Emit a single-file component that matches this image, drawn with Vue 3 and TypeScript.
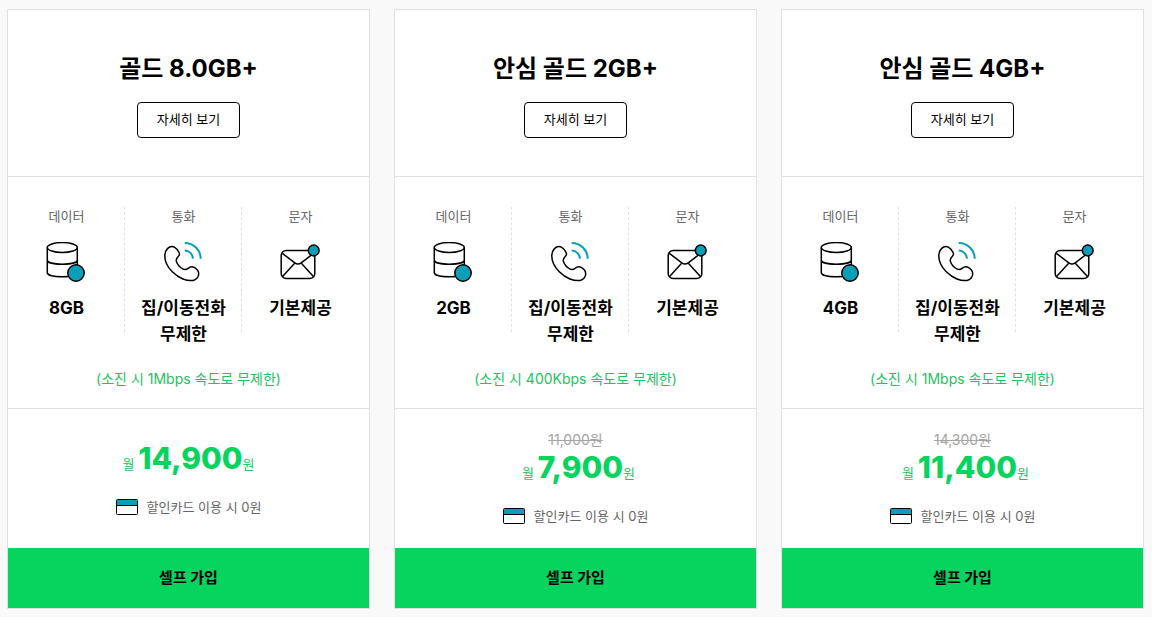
<script setup lang="ts">
interface Plan {
  name: string
  data: string
  note: string
  original?: string
  price: string
}

const plans: Plan[] = [
  { name: '골드 8.0GB+', data: '8GB', note: '(소진 시 1Mbps 속도로 무제한)', price: '14,900' },
  { name: '안심 골드 2GB+', data: '2GB', note: '(소진 시 400Kbps 속도로 무제한)', original: '11,000원', price: '7,900' },
  { name: '안심 골드 4GB+', data: '4GB', note: '(소진 시 1Mbps 속도로 무제한)', original: '14,300원', price: '11,400' },
]
</script>

<template>
  <main class="plans">
    <article v-for="plan in plans" :key="plan.name" class="card">
      <header class="head">
        <h2 class="name">{{ plan.name }}</h2>
        <button type="button" class="detail">자세히 보기</button>
      </header>

      <section class="specs">
        <ul class="columns">
          <li class="column">
            <span class="label">데이터</span>
            <svg class="icon" viewBox="0 0 40 40" aria-hidden="true">
              <g class="line">
                <ellipse cx="16.3" cy="5.5" rx="15" ry="5" />
                <path d="M1.3 5.5v25.3c0 2.2 6 4 15 4s15-1.8 15-4V5.5M1.3 18.2c0 2.2 6 4 15 4s15-1.8 15-4" />
                <circle class="dot" cx="30" cy="31" r="8.2" />
              </g>
            </svg>
            <strong class="value">{{ plan.data }}</strong>
          </li>
          <li class="column">
            <span class="label">통화</span>
            <svg class="icon" viewBox="0 0 40 40" aria-hidden="true">
              <path class="line" d="M4.5 6.6C6.5 4.6 9.5 4.1 11.7 5.3C13.7 6.4 15.3 8.7 16.2 10.7C16.9 12.3 16.4 13.4 15.2 14.5C13.3 16.3 12.7 17.6 13.5 19.8C14.7 23 17 25.6 20.2 27.2C22.3 28.2 23.6 27.6 25.4 26.1C27.3 24.4 29.8 24.5 31.7 25.7C33.7 26.9 35.7 29.3 35.7 31.9C35.7 34.8 33.4 37.8 30 38.4C24.3 39.4 15.8 36.4 9.3 29.8C3.9 24.3 1.6 18.2 1.8 13.2C1.9 10.5 2.7 8.4 4.5 6.6Z" />
              <path class="wave" d="M21.7 1C30.5 1 37.6 7.8 37.7 16.7M21.7 8.5C26.2 8.6 29.6 12 30 16.7" />
            </svg>
            <strong class="value">집/이동전화<br />무제한</strong>
          </li>
          <li class="column">
            <span class="label">문자</span>
            <svg class="icon" viewBox="0 0 40 40" aria-hidden="true">
              <g class="line">
                <rect x="1.2" y="8.5" width="33.6" height="28" rx="5" />
                <path d="M2.3 11.3L14.8 20.9Q18 23.3 21.2 20.9L33.7 11.3M14.4 21.6L2.6 34.4M21.6 21.6L33.4 34.4" />
                <circle class="dot" cx="33.7" cy="8.5" r="5.4" />
              </g>
            </svg>
            <strong class="value">기본제공</strong>
          </li>
        </ul>
        <p class="note">{{ plan.note }}</p>
      </section>

      <section class="pricing">
        <del v-if="plan.original" class="original">{{ plan.original }}</del>
        <p class="price">월 <strong class="amount">{{ plan.price }}</strong>원</p>
        <p class="discount">
          <svg class="card-icon" viewBox="0 0 22 16" aria-hidden="true">
            <rect x="0.5" y="0.5" width="21" height="15" rx="1" fill="#fff" />
            <path d="M1 1h20v5H1z" fill="#0a9fb8" />
            <path d="M1 6.5h20" stroke="#000" />
            <rect x="0.5" y="0.5" width="21" height="15" rx="1" fill="none" stroke="#000" />
          </svg>
          할인카드 이용 시 0원
        </p>
      </section>

      <button type="button" class="join">셀프 가입</button>
    </article>
  </main>
</template>

<style>
body {
  background: #f9f9f9;
}
</style>

<style scoped>
.plans {
  display: grid;
  grid-template-columns: repeat(3, minmax(0, 1fr));
  gap: 24px;
  padding: 9px 8px 8px 7px;
  font-family: Inter, "Noto Sans CJK KR", sans-serif;
  color: #000;
  text-align: center;
}

.card {
  display: flex;
  flex-direction: column;
  border: 1px solid #e1e1e1;
  background: #fff;
}

h2,
p,
ul {
  margin: 0;
  padding: 0;
}

button {
  font-family: inherit;
  color: inherit;
  cursor: pointer;
}

.head {
  display: flex;
  flex-direction: column;
  align-items: center;
  gap: 15px;
  padding: 41px 16px 38px;
  border-bottom: 1px solid #e1e1e1;
}

.name {
  font-size: 24px;
  font-weight: 700;
  line-height: 36px;
}

.detail {
  height: 36px;
  padding: 0 19px 2px;
  border: 1px solid #000;
  border-radius: 4px;
  background: #fff;
  font-size: 13px;
  line-height: 20px;
}

.specs {
  padding: 30px 0 18px;
  border-bottom: 1px solid #e1e1e1;
}

.columns {
  display: grid;
  grid-template-columns: repeat(3, minmax(0, 1fr));
  padding-right: 10px;
  list-style: none;
}

.column {
  position: relative;
  display: flex;
  flex-direction: column;
  align-items: center;
}

.column + .column::before {
  content: "";
  position: absolute;
  top: 0;
  bottom: 15px;
  left: -1px;
  border-left: 1px dashed #e1e1e1;
}

.label {
  color: #666;
  font-size: 13px;
  line-height: 18px;
}

.icon {
  width: 40px;
  height: 40px;
  margin: 17px 2px 13px 0;
}

.line {
  fill: none;
  stroke: #000;
  stroke-width: 1.5;
  stroke-linejoin: round;
}

.dot {
  fill: #0a9fb8;
}

.wave {
  fill: none;
  stroke: #0a9fb8;
  stroke-width: 2;
}

.value {
  font-size: 17px;
  font-weight: 700;
  line-height: 26px;
}

.note {
  margin-top: 21px;
  color: #26c163;
  font-size: 14px;
  line-height: 22px;
}

.pricing {
  display: flex;
  flex: 1;
  flex-direction: column;
  align-items: center;
  justify-content: center;
  box-sizing: border-box;
  min-height: 139px;
  padding-top: 2px;
}

.original {
  color: #a5a5a5;
  font-size: 14px;
  line-height: 18px;
}

.price {
  color: #26c163;
  font-size: 13px;
  line-height: 36px;
}

.original + .price {
  padding-left: 6px;
}

.amount {
  color: #06d45e;
  font-size: 30px;
  font-weight: 800;
}

.discount {
  display: flex;
  align-items: center;
  gap: 9px;
  margin-top: 13px;
  color: #666;
  font-size: 13px;
  line-height: 24px;
}

.card-icon {
  width: 22px;
  height: 16px;
}

.join {
  height: 60px;
  padding: 0 16px 4px;
  border: 0;
  background: #06d45e;
  font-size: 15px;
  font-weight: 700;
}
</style>
